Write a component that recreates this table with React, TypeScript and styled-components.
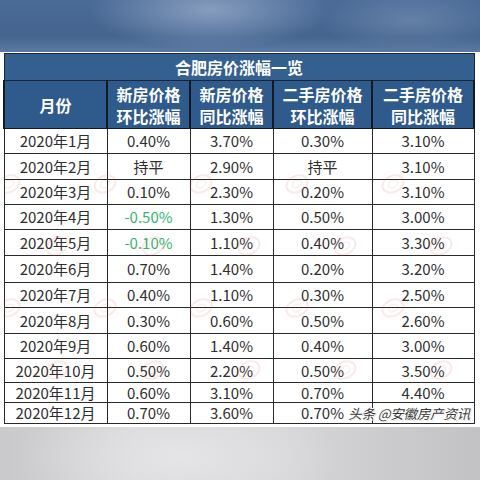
import * as React from "react";
import styled, { createGlobalStyle } from "styled-components";

const GlobalStyle = createGlobalStyle`
  html, body {
    margin: 0;
    padding: 0;
    background: #ffffff;
  }
  body {
    font-family: "Noto Sans CJK SC", "Noto Sans", sans-serif;
  }
`;

const Page = styled.div`
  width: 480px;
  height: 480px;
  display: flex;
  flex-direction: column;
  overflow: hidden;
  background: #ffffff;
  position: relative;
`;

const TopBand = styled.div`
  height: 52px;
  flex: none;
  margin-bottom: 1px;
  background:
    radial-gradient(ellipse 120px 40px at 210px 10px, rgba(150, 170, 200, 0.8), rgba(150, 170, 200, 0) 100%),
    radial-gradient(ellipse 90px 30px at 410px 20px, rgba(120, 145, 180, 0.6), rgba(120, 145, 180, 0) 100%),
    linear-gradient(180deg, #4b6b98 0%, #45658f 70%, #5b7aa3 100%);
`;

const TableWrap = styled.div`
  flex: none;
  padding: 0 7px 0 3px;
  position: relative;
`;

const Table = styled.table`
  width: 470px;
  border-collapse: collapse;
  table-layout: fixed;
  font-family: "Noto Sans CJK SC", "Noto Sans", sans-serif;
`;

const TitleCell = styled.th`
  height: 26px;
  padding: 0;
  background: #34608f;
  color: #ffffff;
  font-size: 16px;
  font-weight: 700;
  text-align: center;
  border: 1px solid #1b2533;
`;

const HeadCell = styled.th`
  height: 47px;
  padding: 0;
  background: #2f5b8c;
  color: #ffffff;
  font-size: 16px;
  font-weight: 700;
  line-height: 22px;
  text-align: center;
  border: 1px solid #141a22;
  border-left-width: 2px;
  border-right-width: 2px;
`;

const Cell = styled.td<{ $h: number; $green?: boolean }>`
  height: ${(p) => p.$h - 1}px;
  padding: 0;
  text-align: center;
  font-size: 15px;
  line-height: 18px;
  color: ${(p) => (p.$green ? "#35b56c" : "#2e2e2e")};
  border: 1px solid #2a2a2a;
  background: transparent;
  white-space: nowrap;
`;

const Marks = styled.svg`
  position: absolute;
  left: 3px;
  top: 75px;
  pointer-events: none;
`;

const Credit = styled.div`
  position: absolute;
  right: 10px;
  bottom: 2px;
  font-size: 13.5px;
  line-height: 18px;
  font-style: italic;
  color: #3a3a3a;
  letter-spacing: -0.2px;
  text-shadow:
    1px 0 0 #ffffff, -1px 0 0 #ffffff, 0 1px 0 #ffffff, 0 -1px 0 #ffffff,
    1px 1px 1px rgba(0, 0, 0, 0.25);
  pointer-events: none;
`;

const BottomBand = styled.div`
  flex: 1;
  margin-top: 3px;
  background:
    radial-gradient(ellipse 160px 60px at 180px 30px, rgba(230, 230, 232, 0.9), rgba(230, 230, 232, 0) 100%),
    linear-gradient(90deg, #c9c9cb 0%, #d9d9db 30%, #d6d6d8 60%, #c2c2c4 100%);
`;

const colWidths = [103, 83, 83, 99, 102];

type Row = { month: string; vals: string[]; h: number };

const rows: Row[] = [
  { month: "2020年1月", vals: ["0.40%", "3.70%", "0.30%", "3.10%"], h: 25 },
  { month: "2020年2月", vals: ["持平", "2.90%", "持平", "3.10%"], h: 26 },
  { month: "2020年3月", vals: ["0.10%", "2.30%", "0.20%", "3.10%"], h: 25 },
  { month: "2020年4月", vals: ["-0.50%", "1.30%", "0.50%", "3.00%"], h: 25 },
  { month: "2020年5月", vals: ["-0.10%", "1.10%", "0.40%", "3.30%"], h: 26 },
  { month: "2020年6月", vals: ["0.70%", "1.40%", "0.20%", "3.20%"], h: 27 },
  { month: "2020年7月", vals: ["0.40%", "1.10%", "0.30%", "2.50%"], h: 25 },
  { month: "2020年8月", vals: ["0.30%", "0.60%", "0.50%", "2.60%"], h: 26 },
  { month: "2020年9月", vals: ["0.60%", "1.40%", "0.40%", "3.00%"], h: 25 },
  { month: "2020年10月", vals: ["0.50%", "2.20%", "0.50%", "3.50%"], h: 24 },
  { month: "2020年11月", vals: ["0.60%", "3.10%", "0.70%", "4.40%"], h: 20 },
  { month: "2020年12月", vals: ["0.70%", "3.60%", "0.70%", ""], h: 21 },
];

// faint pink logo stamps scattered over the data cells
const WatermarkLayer = () => {
  const spots: JSX.Element[] = [];
  for (let r = 0; r < 5; r++) {
    for (let c = 0; c < 6; c++) {
      const x = c * 96 + (r % 2 ? 48 : 0) + 6;
      const y = r * 62 + 56;
      if (y > 290) continue;
      spots.push(
        <g key={`${r}-${c}`} transform={`translate(${x} ${y}) rotate(-25)`} opacity={0.13}>
          <ellipse cx="0" cy="0" rx="11" ry="8" fill="none" stroke="#e06060" strokeWidth="2" />
          <ellipse cx="0" cy="0" rx="5" ry="3.5" fill="none" stroke="#e06060" strokeWidth="1.2" />
        </g>
      );
    }
  }
  return (
    <Marks width="470" height="295" viewBox="0 0 470 295">
      {spots}
    </Marks>
  );
};

export default function App() {
  return (
    <Page>
      <GlobalStyle />
      <TopBand />
      <TableWrap>
        <Table>
          <colgroup>
            {colWidths.map((w, i) => (
              <col key={i} style={{ width: w }} />
            ))}
          </colgroup>
          <thead>
            <tr>
              <TitleCell colSpan={5}>合肥房价涨幅一览</TitleCell>
            </tr>
            <tr>
              <HeadCell>月份</HeadCell>
              <HeadCell>新房价格<br />环比涨幅</HeadCell>
              <HeadCell>新房价格<br />同比涨幅</HeadCell>
              <HeadCell>二手房价格<br />环比涨幅</HeadCell>
              <HeadCell>二手房价格<br />同比涨幅</HeadCell>
            </tr>
          </thead>
          <tbody>
            {rows.map((row) => (
              <tr key={row.month}>
                <Cell $h={row.h}>{row.month}</Cell>
                {row.vals.map((v, i) => (
                  <Cell key={i} $h={row.h} $green={v.startsWith("-")}>
                    {v}
                  </Cell>
                ))}
              </tr>
            ))}
          </tbody>
        </Table>
        <WatermarkLayer />
        <Credit>头条 @安徽房产资讯</Credit>
      </TableWrap>
      <BottomBand />
    </Page>
  );
}
